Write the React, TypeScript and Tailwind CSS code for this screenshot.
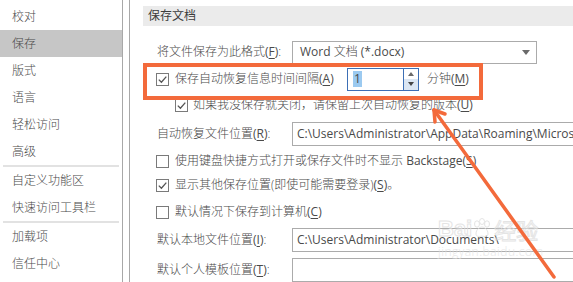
import React from "react";

const FONT = "'Open Sans','Noto Sans CJK SC',sans-serif";

function Check({ checked }: { checked?: boolean }) {
  return (
    <span className="w-[13px] h-[13px] border border-[#7a7a7a] bg-white flex items-center justify-center shrink-0">
      {checked && (
        <svg width="11" height="11" viewBox="0 0 11 11">
          <path d="M1.8 5.6 L4.4 8.2 L9.3 2.6" stroke="#555" strokeWidth="1.3" fill="none" />
        </svg>
      )}
    </span>
  );
}

function U({ c }: { c: string }) {
  return (
    <span className="font-normal">
      (<span className="underline underline-offset-2">{c}</span>)
    </span>
  );
}

const sideItems: (string | null)[] = [
  "校对",
  "保存",
  "版式",
  "语言",
  "轻松访问",
  "高级",
  null,
  "自定义功能区",
  "快速访问工具栏",
  null,
  "加载项",
  "信任中心",
];

export default function App() {
  return (
    <div
      className="relative w-[573px] h-[282px] overflow-hidden bg-white flex text-[12px] font-light text-[#4a4a4a]"
      style={{ fontFamily: FONT }}
    >
      {/* Sidebar */}
      <div className="w-[123px] shrink-0 border-r border-[#a8a8a8] pt-[3px] flex flex-col">
        {sideItems.map((it, i) =>
          it === null ? (
            <div key={i} className="h-[2px] mx-[3px] bg-[#e2e2e2]" />
          ) : (
            <div
              key={i}
              className={`h-[27px] flex items-center pl-[12px] ${it === "保存" ? "bg-[#c6c6c6]" : ""}`}
            >
              {it}
            </div>
          )
        )}
      </div>
      <div className="w-[6px] shrink-0" />
      {/* Main */}
      <div className="flex-1 min-w-0 border-l border-[#a8a8a8] pl-[13px] pt-[6px] flex flex-col">
        <div className="h-[25px] bg-[#ebebeb] pl-[5px] flex items-center text-[#3c3c3c] font-normal">保存文档</div>

        {/* R1 */}
        <div className="mt-[14px] h-[24px] pl-[14px] flex items-center shrink-0">
          <span className="w-[135px] shrink-0 whitespace-nowrap">
            将文件保存为此格式<U c="F" />:
          </span>
          <div className="w-[245px] h-[23px] shrink-0 border border-[#ababab] flex items-center pl-[7px] pr-[6px]">
            <span className="flex-1 whitespace-nowrap">
              <span className="font-normal">Word</span> 文档 <span className="font-normal">(*.docx)</span>
            </span>
            <svg width="8" height="5" viewBox="0 0 8 5">
              <path d="M0 0 L8 0 L4 5 Z" fill="#6a6a6a" />
            </svg>
          </div>
        </div>

        {/* R2 */}
        <div className="mt-[3px] h-[24px] pl-[13px] flex items-center shrink-0">
          <Check checked />
          <span className="ml-[6px] w-[172px] shrink-0 whitespace-nowrap">
            保存自动恢复信息时间间隔<U c="A" />
          </span>
          <div className="w-[72px] h-[23px] shrink-0 border border-[#3d6fb5] flex bg-white">
            <div className="flex-1 flex items-center pl-[5px]">
              <span className="bg-[#9ccaf0] px-[1px] leading-[16px] font-normal">1</span>
            </div>
            <div className="w-[15px] border-l border-[#3d6fb5] flex flex-col">
              <div className="flex-1 flex items-center justify-center">
                <svg width="6" height="4" viewBox="0 0 6 4">
                  <path d="M0 4 L6 4 L3 0 Z" fill="#6a6a6a" />
                </svg>
              </div>
              <div className="flex-1 flex items-center justify-center bg-[#dbe6f3]">
                <svg width="6" height="4" viewBox="0 0 6 4">
                  <path d="M0 0 L6 0 L3 4 Z" fill="#444" />
                </svg>
              </div>
            </div>
          </div>
          <span className="ml-[8px] whitespace-nowrap">
            分钟<U c="M" />
          </span>
        </div>

        {/* R3 */}
        <div className="mt-[4px] h-[20px] pl-[32px] flex items-center shrink-0">
          <Check checked />
          <span className="ml-[5px] whitespace-nowrap">
            如果我没保存就关闭，请保留上次自动恢复的版本<U c="U" />
          </span>
        </div>

        {/* R4 */}
        <div className="mt-[6px] h-[25px] pl-[14px] flex items-center shrink-0">
          <span className="w-[135px] shrink-0 whitespace-nowrap">
            自动恢复文件位置<U c="R" />:
          </span>
          <div className="w-[330px] h-[24px] shrink-0 border border-[#ababab] flex items-center pl-[4px] whitespace-nowrap overflow-hidden font-normal">
            C:\Users\Administrator\AppData\Roaming\Microsoft\Word\
          </div>
        </div>

        {/* R5 */}
        <div className="mt-[5px] h-[20px] pl-[13px] flex items-center shrink-0">
          <Check />
          <span className="ml-[6px] whitespace-nowrap">
            使用键盘快捷方式打开或保存文件时不显示 <span className="font-normal">Backstage</span>
            <U c="S" />
          </span>
        </div>

        {/* R6 */}
        <div className="mt-[4px] h-[20px] pl-[13px] flex items-center shrink-0">
          <Check checked />
          <span className="ml-[6px] whitespace-nowrap">
            显示其他保存位置(即使可能需要登录)<U c="S" />。
          </span>
        </div>

        {/* R7 */}
        <div className="mt-[7px] h-[20px] pl-[13px] flex items-center shrink-0">
          <Check />
          <span className="ml-[6px] whitespace-nowrap">
            默认情况下保存到计算机<U c="C" />
          </span>
        </div>

        {/* R8 */}
        <div className="mt-[5px] h-[25px] pl-[14px] flex items-center shrink-0">
          <span className="w-[135px] shrink-0 whitespace-nowrap">
            默认本地文件位置<U c="I" />:
          </span>
          <div className="w-[330px] h-[24px] shrink-0 border border-[#ababab] flex items-center pl-[4px] whitespace-nowrap font-normal">
            C:\Users\Administrator\Documents\
          </div>
        </div>

        {/* R9 */}
        <div className="mt-[5px] h-[25px] pl-[14px] flex items-center shrink-0">
          <span className="w-[135px] shrink-0 whitespace-nowrap">
            默认个人模板位置<U c="T" />:
          </span>
          <div className="w-[330px] h-[24px] shrink-0 border border-[#ababab]" />
        </div>
      </div>

      {/* Watermark */}
      <div className="absolute left-[438px] top-[218px] pointer-events-none select-none flex flex-col items-start opacity-80">
        <div className="flex items-end">
          <span
            className="text-[22px] font-bold leading-none text-transparent [-webkit-text-stroke:1px_#dedede]"
            style={{ fontFamily: "'Liberation Sans',sans-serif" }}
          >
            Bai
          </span>
          <svg width="22" height="20" viewBox="0 0 22 20" className="mb-[2px]">
            <g fill="none" stroke="#dedede" strokeWidth="1">
              <ellipse cx="5" cy="6" rx="2.5" ry="3.2" />
              <ellipse cx="10" cy="3.5" rx="2.5" ry="3" />
              <ellipse cx="15" cy="6" rx="2.5" ry="3.2" />
              <path d="M4 16 C4 11 8 9 10 9 C12 9 16 11 16 16 C16 18.5 13 19 10 18 C7 19 4 18.5 4 16 Z" />
            </g>
          </svg>
          <span
            className="text-[22px] font-normal leading-none text-transparent [-webkit-text-stroke:1px_#dedede]"
            style={{ fontFamily: "'Noto Sans CJK SC',sans-serif" }}
          >
            经验
          </span>
        </div>
        <span className="text-[12px] text-[#e2e2e2] leading-none mt-[6px] tracking-[0.5px]">jingyan.baidu.com</span>
      </div>

      {/* Orange highlight box */}
      <div className="absolute left-[143px] top-[63px] w-[340px] h-[37px] border-[4px] border-[#f36a3b] pointer-events-none" />

      {/* Arrow */}
      <svg className="absolute left-0 top-0 pointer-events-none" width="573" height="282" viewBox="0 0 573 282">
        <g stroke="#f36a3b" strokeWidth="3.5" strokeLinecap="round" fill="none">
          <line x1="554" y1="277" x2="434" y2="110" />
          <line x1="434" y1="110" x2="435" y2="122" />
          <line x1="434" y1="110" x2="445" y2="114" />
        </g>
      </svg>
    </div>
  );
}
